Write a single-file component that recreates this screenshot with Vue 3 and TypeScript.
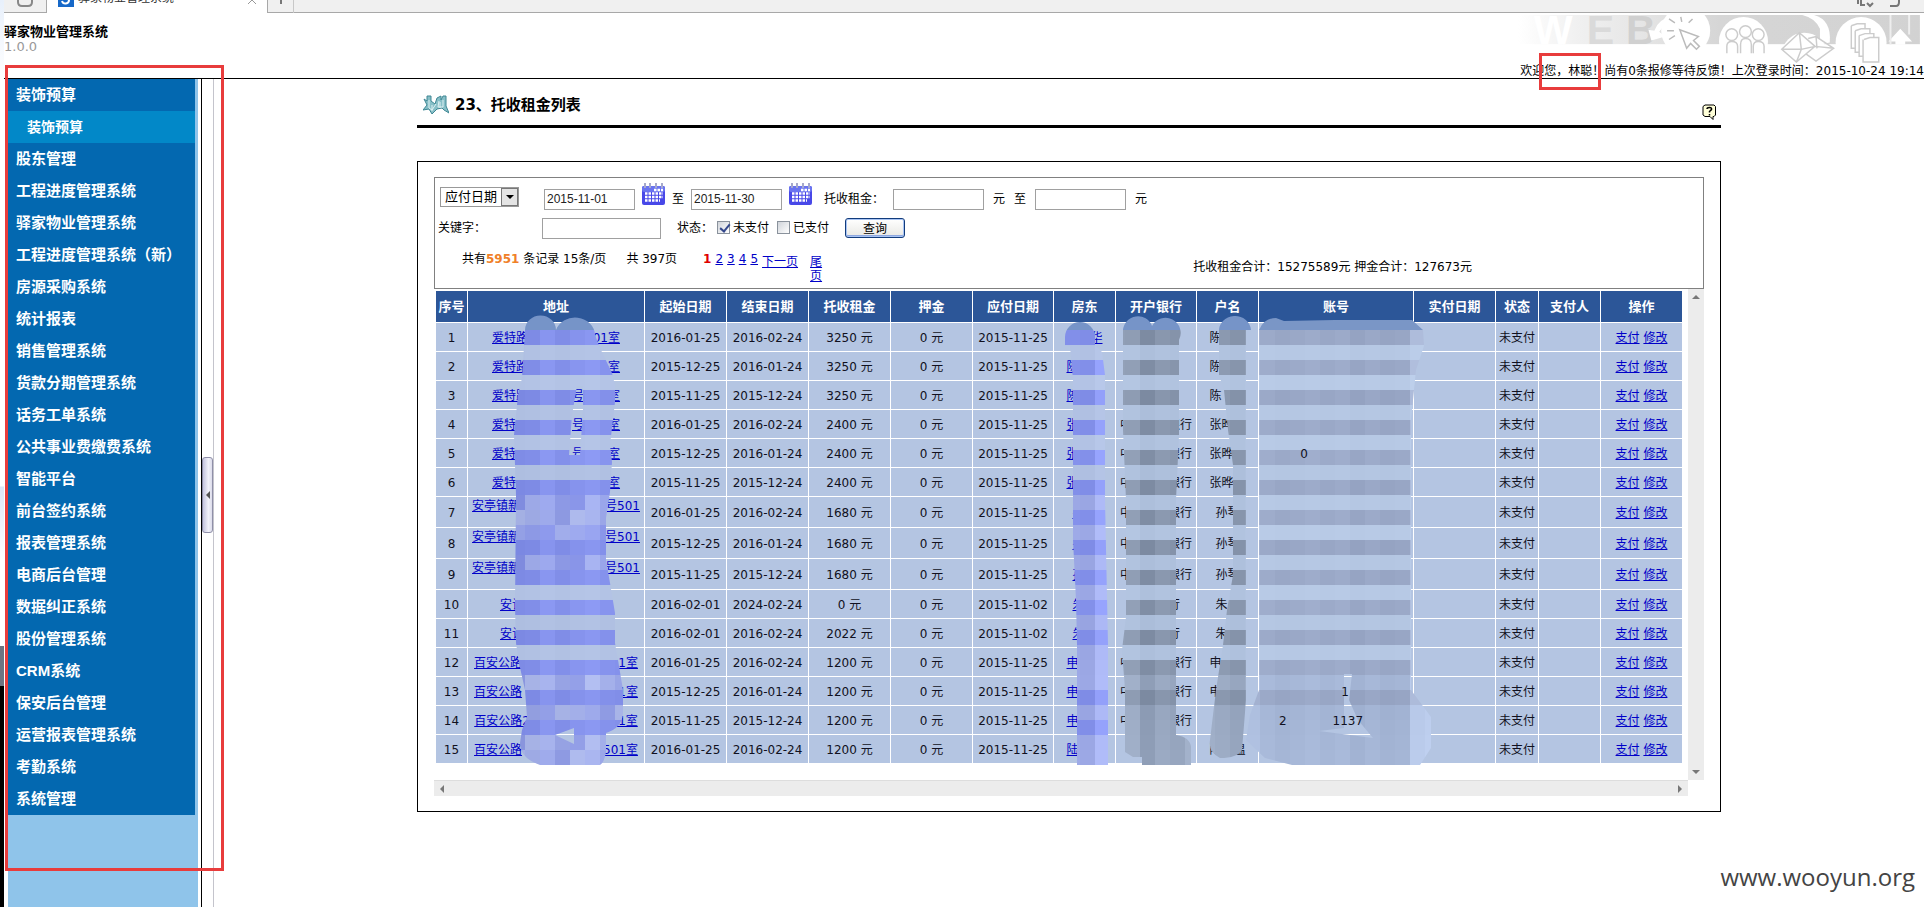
<script setup lang="ts">
import { ref } from 'vue'

type Part = string | number

interface Row {
  address: Part[]
  twoLines?: boolean
  start: string
  end: string
  rent: string
  due: string
  landlord: Part[]
  bank: Part[]
  holder: Part[]
  account: Part[]
}

interface Patch {
  id: string
  outline: string
  x: number
  count: number
  tones: string
  palette: Record<string, number[]>
  shade: number[]
}

const menu = [
  '股东管理', '工程进度管理系统', '驿家物业管理系统', '工程进度管理系统（新）', '房源采购系统',
  '统计报表', '销售管理系统', '货款分期管理系统', '话务工单系统', '公共事业费缴费系统', '智能平台',
  '前台签约系统', '报表管理系统', '电商后台管理', '数据纠正系统', '股份管理系统', 'CRM系统',
  '保安后台管理', '运营报表管理系统', '考勤系统', '系统管理',
]

const columns = [
  { title: '序号', width: 32 },
  { title: '地址', width: 177 },
  { title: '起始日期', width: 82 },
  { title: '结束日期', width: 82 },
  { title: '托收租金', width: 82 },
  { title: '押金', width: 82 },
  { title: '应付日期', width: 81 },
  { title: '房东', width: 62 },
  { title: '开户银行', width: 81 },
  { title: '户名', width: 62 },
  { title: '账号', width: 155 },
  { title: '实付日期', width: 82 },
  { title: '状态', width: 43 },
  { title: '支付人', width: 62 },
  { title: '操作', width: 82 },
]

const bankFull: Part[] = ['中', 36, '银行']
const shortAddress: Part[] = ['爱特路', 44, '号', 24, '室']
const longAddress: Part[] = ['安亭镇新', 85, '号501']

const rows: Row[] = [
  { address: ['爱特路', 27, '号', 18, '501室'], start: '2016-01-25', end: '2016-02-24', rent: '3250', due: '2015-11-25', landlord: [24, '华'], bank: [48], holder: ['陈', 24], account: [100] },
  { address: ['爱特路', 80, '室'], start: '2015-12-25', end: '2016-01-24', rent: '3250', due: '2015-11-25', landlord: ['陈', 24], bank: [48], holder: ['陈', 24], account: [100] },
  { address: shortAddress, start: '2015-11-25', end: '2015-12-24', rent: '3250', due: '2015-11-25', landlord: ['陈', 24], bank: [48], holder: ['陈', 24], account: [100] },
  { address: shortAddress, start: '2016-01-25', end: '2016-02-24', rent: '2400', due: '2015-11-25', landlord: ['张', 24], bank: bankFull, holder: ['张晔', 12], account: [100] },
  { address: shortAddress, start: '2015-12-25', end: '2016-01-24', rent: '2400', due: '2015-11-25', landlord: ['张', 24], bank: bankFull, holder: ['张晔', 12], account: ['0', 64] },
  { address: ['爱特路', 80, '室'], start: '2015-11-25', end: '2015-12-24', rent: '2400', due: '2015-11-25', landlord: ['张', 24], bank: bankFull, holder: ['张晔', 12], account: [100] },
  { address: longAddress, twoLines: true, start: '2016-01-25', end: '2016-02-24', rent: '1680', due: '2015-11-25', landlord: ['孙', 12], bank: bankFull, holder: ['孙琴'], account: [100] },
  { address: longAddress, twoLines: true, start: '2015-12-25', end: '2016-01-24', rent: '1680', due: '2015-11-25', landlord: ['孙', 12], bank: bankFull, holder: ['孙琴'], account: [100] },
  { address: longAddress, twoLines: true, start: '2015-11-25', end: '2015-12-24', rent: '1680', due: '2015-11-25', landlord: ['孙', 12], bank: bankFull, holder: ['孙琴'], account: [100] },
  { address: ['安计', 88], start: '2016-02-01', end: '2024-02-24', rent: '0', due: '2015-11-02', landlord: ['朱', 12], bank: [36, '行'], holder: ['朱', 12], account: [100] },
  { address: ['安计', 88], start: '2016-02-01', end: '2016-02-24', rent: '2022', due: '2015-11-02', landlord: ['朱', 12], bank: [36, '行'], holder: ['朱', 12], account: [100] },
  { address: ['百安公路', 81, '501室'], start: '2016-01-25', end: '2016-02-24', rent: '1200', due: '2015-11-25', landlord: ['申', 24], bank: bankFull, holder: ['申', 24], account: [100] },
  { address: ['百安公路', 81, '501室'], start: '2015-12-25', end: '2016-01-24', rent: '1200', due: '2015-11-25', landlord: ['申', 24], bank: bankFull, holder: ['申', 24], account: [18, '1'] },
  { address: ['百安公路2', 73, '501室'], start: '2015-11-25', end: '2015-12-24', rent: '1200', due: '2015-11-25', landlord: ['申', 24], bank: bankFull, holder: [36], account: ['2', 46, '1137', 30] },
  { address: ['百安公路', 81, '501室'], start: '2016-01-25', end: '2016-02-24', rent: '1200', due: '2015-11-25', landlord: ['陆', 24], bank: [72], holder: ['陆', 12, '温'], account: [100] },
]

const CELL = 15
const TOP = 315

// One tone letter per 15px band, top to bottom.
const banded = 'HDLDLDLDLDLDLDLDLDLDLDLDMDMMMM'
const bluePalette = { H: [118, 148, 200], D: [133, 146, 236], M: [158, 170, 231], L: [178, 194, 228], X: [150, 162, 234] }
const greyPalette = { H: [118, 148, 200], D: [138, 152, 175], M: [153, 168, 193], L: [176, 194, 222], X: [160, 175, 200] }

const patches: Patch[] = [
  {
    id: 'address',
    outline: 'M525 330 A15 14 0 0 1 556 330 A20 18 0 0 1 595 335 L600 348 L612 373 L615 385 V402 L610 445 L612 462 L610 492 L606 518 V560 L610 583 L615 613 V643 L618 660 L623 690 V713 Q622 728 606 733 V752 Q604 763 600 765 H540 Q520 758 520 743 L522 730 L527 717 L525 690 L519 663 L516 643 L515 607 L516 495 L514 435 L518 395 L522 378 Z M577 386 H583 V409 L580 455 H569 L572 415 Z M555 735 L574 728 V744 Z',
    x: 510, count: 8, tones: 'HDLDLDLDLDLDXMXDXDLDLDLDMDMDMM', palette: bluePalette, shade: [-8, -6, 4, -4, 2, 6, 0, -2],
  },
  {
    id: 'landlord',
    outline: 'M1065 337 A15 15 0 0 1 1095 337 V345 L1102 352 L1105 375 V500 L1108 645 V765 H1077 V645 L1076 600 L1073 540 V380 L1070 346 H1065 Z',
    x: 1065, count: 3, tones: 'HDLDLDLDLDLDMDMDMDMDMDMMMDMDMM', palette: bluePalette, shade: [-2, -4, 16],
  },
  {
    id: 'bank',
    outline: 'M1123 330 A15 15 0 0 1 1152 326 A14 14 0 0 1 1179 340 V435 L1176 500 V735 Q1190 737 1191 747 V765 H1142 V757 H1133 L1125 752 V690 L1122 650 L1126 617 V500 L1123 430 Z',
    x: 1110, count: 6, tones: banded, palette: greyPalette, shade: [8, 6, -12, 0, -4, 8],
  },
  {
    id: 'holder',
    outline: 'M1219 332 A16 15 0 0 1 1251 330 H1246 V700 L1242 750 Q1237 758 1220 758 Q1208 752 1210 740 L1216 690 L1223 645 L1227 610 L1233 575 V465 L1228 430 L1224 390 L1219 375 Z',
    x: 1200, count: 4, tones: banded, palette: greyPalette, shade: [6, 2, -4, 4],
  },
  {
    id: 'account',
    outline: 'M1259 330 Q1264 318 1276 318 L1284 321 L1335 320 H1412 L1423 330 L1424 346 L1416 370 L1411 420 V690 L1431 717 V748 L1420 765 H1292 L1265 758 L1246 740 L1250 715 L1259 690 Z M1344 674 H1352 L1349 700 L1358 720 L1373 738 L1319 731 L1344 728 Z',
    x: 1245, count: 13, tones: banded,
    palette: { H: [122, 150, 198], D: [155, 169, 200], M: [165, 182, 214], L: [182, 200, 228], X: [170, 185, 215] },
    shade: [10, 2, -2, 0, 3, -1, 2, -5, 0, -4, -2, 20, 24],
  },
]

function tiles(p: Patch) {
  const out: { x: number; y: number; fill: string }[] = []
  p.tones.split('').forEach((tone, r) => {
    for (let c = 0; c < p.count; c++) {
      const checker = tone === 'X' || (tone === 'M' && p.id === 'address') ? ((c * 7 + r * 3) % 4) * 9 - 14 : 0
      const spread = tone === 'H' ? 0 : tone === 'L' ? p.shade[c] / 4 : p.shade[c]
      const wobble = tone === 'H' ? 0 : ((c * 5 + r * 11) % 5) - 2
      const [red, green, blue] = p.palette[tone].map((v, i) => Math.round(v + spread + wobble + (i < 2 ? checker : checker / 4)))
      out.push({ x: p.x + c * CELL, y: TOP + r * CELL, fill: `rgb(${red},${green},${blue})` })
    }
  })
  return out
}

const dateType = ref('应付日期')
const from = ref('2015-11-01')
const to = ref('2015-11-30')
const min = ref('')
const max = ref('')
const keyword = ref('')
const unpaid = ref(true)
const paid = ref(false)
</script>

<template>
  <div class="screen">
    <div class="desktop"><i></i><b></b></div>
    <div class="page">
      <div class="chrome">
        <div class="chrome-home"><svg width="16" height="12"><path d="M1 0V2Q1 6 5 6H11Q15 6 15 2V0" fill="none" stroke="#888" stroke-width="2" /></svg></div>
        <div class="tab">
          <svg width="16" height="7"><rect width="16" height="7" fill="#1668c8" /><path d="M4 1Q5 4 8 3.500Q11 3 11 0" stroke="#fff" stroke-width="2" fill="none" /></svg>
          <span class="tab-title">驿家物业管理系统</span>
          <svg class="tab-close" width="8" height="6"><path d="M0 4 4 0 8 4" fill="none" stroke="#999" /></svg>
        </div>
        <div class="tab-new"><svg width="6" height="5"><path d="M3 0V4" stroke="#777" stroke-width="2" /></svg></div>
        <svg class="chrome-tools" width="68" height="8"><path d="M2 0V4M5 0V5H9M11 3 14 6 17 3M34 6H40Q43 6 43 2V0" fill="none" stroke="#777" stroke-width="2" /></svg>
      </div>

      <header class="header">
        <div>
          <div class="brand">驿家物业管理系统</div>
          <div class="version">1.0.0</div>
        </div>
        <div class="header-right">
          <svg class="banner" width="410" height="50" viewBox="4 0 410 50">
            <defs>
              <linearGradient id="fade"><stop offset="0" stop-color="#fff" /><stop offset=".14" stop-color="#f1f1f1" /><stop offset=".3" stop-color="#e6e6e6" /><stop offset=".5" stop-color="#d6d6d6" /><stop offset="1" stop-color="#d2d2d2" /></linearGradient>
            </defs>
            <rect x="4" width="410" height="30" fill="url(#fade)" />
            <g font-family="Liberation Sans, sans-serif" font-weight="700" font-size="42">
              <text x="20" y="30" fill="#fff">W</text>
              <text x="74" y="30" fill="#dadada">E</text><text x="114" y="30" fill="#d0d0d0">B</text>
            </g>
            <g fill="#fff">
              <circle cx="175" cy="16" r="25" /><circle cx="234" cy="27" r="25" /><circle cx="296" cy="41" r="23" /><circle cx="354" cy="28" r="26" />
              <path d="M137 15 140 26 154 22 148 17Q152 10 164 7L160 2Q147 4 143 16Z" />
              <path d="M294 0Q307 3 312 14V30L322 28Q324 5 306 0Z" />
              <path d="M382 27 394 14 406 27H399V30H389V27Z" />
            </g>
            <rect x="4" y="30" width="410" height="20" fill="#fff" />
            <path d="M384 0V30M403 0V20" stroke="#eee" stroke-width="2" />
            <g fill="none" stroke="#bbb" stroke-width="1.500">
              <path d="M169 15 176 34 180 29 186 35 189 32 183 26 188 22ZM158 4 164 8M170 2 171 7M182 4 178 8M156 16H163M158 25 164 21" />
              <g stroke="#ccc">
                <circle cx="222" cy="20" r="6" /><circle cx="236" cy="17" r="6" /><circle cx="249" cy="20" r="6" />
                <path d="M217 39V32Q217 27 222 27Q228 27 228 32V39M231 39V30Q231 24 236 24Q242 24 242 30V39M244 39V32Q244 27 249 27Q255 27 255 32V39" />
                <path d="M273 35 291 18 307 32 288 48ZM273 35 293 35 291 18M288 48 293 35 307 32M300 24 308 22 326 34 308 47 298 40M307 32 326 34M308 22 309 34" />
                <path d="M357 25 363 23H372V48H356V25M352 21 358 19H367V23M356 42H352V21M348 16 354 14H363V19M352 38H348V16M344 11 350 9H358V14M348 34H344V11" />
              </g>
            </g>
          </svg>
          <div class="welcome">欢迎您，林聪！尚有0条报修等待反馈！上次登录时间：2015-10-24 19:14</div>
        </div>
      </header>

      <div class="body">
        <nav class="sidebar">
          <ul>
            <li><a href="#">装饰预算</a></li>
            <li class="sub"><a href="#">装饰预算</a></li>
            <li v-for="m in menu" :key="m"><a href="#">{{ m }}</a></li>
          </ul>
        </nav>
        <div class="splitter"><button type="button" aria-label="收起菜单"><i></i></button></div>

        <main class="content">
          <div class="title-bar">
            <svg width="26" height="20" viewBox="0 0 26 20">
              <path d="M1 4 4 6 4 1 8 1 8 6 12 9 14 3 18 1 18 5 20 1 23 1 23 11 26 18 21 15 19 13 14 14 9 19 6 14 0 15 4 10Z" fill="#87bfc7" stroke="#3f8794" />
              <path d="M6 5V13L9 15 13 9M16 6 15 12 20 12 20 5M9 10 9 16M17 7V13" fill="none" stroke="#dff1f3" />
            </svg>
            <h1>23、托收租金列表</h1>
            <a class="help" href="#" aria-label="帮助">
              <svg width="15" height="16" viewBox="0 0 15 16"><path d="M3 1H12L13.500 2.500V11L12 12.500H11V15.500L8 12.500H3L1 11V2.500Z" fill="#ffffd8" stroke="#000" /><path d="M5 5Q5 3.500 7.500 3.500Q10 3.500 9.500 5.500L7.500 7.500V8.500M7.500 10V11.500" fill="none" stroke="#000" stroke-width="1.500" /></svg>
            </a>
          </div>

          <section class="panel">
            <form class="filter" @submit.prevent>
              <div class="line first">
                <span class="select">
                  <select v-model="dateType" aria-label="日期类型"><option>应付日期</option></select>
                  <i></i>
                </span>
                <div class="dates">
                  <input v-model="from" class="field" aria-label="开始日期" />
                  <svg class="cal" width="23" height="22" viewBox="0 0 23 22"><use href="#calendar" /></svg>
                  <label for="to">至</label>
                  <input id="to" v-model="to" class="field" />
                  <svg class="cal" width="23" height="22" viewBox="0 0 23 22">
                    <g id="calendar">
                      <rect y="3" width="23" height="19" rx="2" fill="#4848e8" />
                      <rect y="3" width="23" height="6" rx="2" fill="#6a74f0" />
                      <path d="M3 0V5M8 0V5M14 0V5M20 0V5" stroke="#a6a9cc" stroke-width="2" />
                      <path d="M12 7H21M3 10.500H21M3 14H21M3 17.500H18" stroke="#fff" stroke-width="2.500" stroke-dasharray="2.500 1" />
                    </g>
                  </svg>
                </div>
                <div class="amounts">
                  <label for="min">托收租金：</label>
                  <input id="min" v-model="min" class="field" />
                  <span>元</span>
                  <label for="max">至</label>
                  <input id="max" v-model="max" class="field" />
                  <span>元</span>
                </div>
              </div>
              <div class="line second">
                <label class="key-label" for="key">关键字：</label>
                <input id="key" v-model="keyword" class="field wide" />
                <span class="state">状态：</span>
                <label class="check"><input v-model="unpaid" type="checkbox" />未支付</label>
                <label class="check"><input v-model="paid" type="checkbox" />已支付</label>
                <button class="query" type="submit">查询</button>
              </div>
              <div class="line third">
                <span>共有<b class="count">5951</b> 条记录 15条/页</span>
                <span class="pages">共 397页</span>
                <span class="pager"><b>1</b><a href="#">2</a><a href="#">3</a><a href="#">4</a><a href="#">5</a></span>
                <a class="next" href="#">下一页</a>
                <a class="last" href="#">尾页</a>
                <span class="totals">托收租金合计：15275589元 押金合计：127673元</span>
              </div>
            </form>

            <div class="grid-area">
              <div class="table-wrap">
                <table>
                  <colgroup><col v-for="c in columns" :key="c.title" :style="{ width: c.width + 'px' }" /></colgroup>
                  <thead><tr><th v-for="c in columns" :key="c.title">{{ c.title }}</th></tr></thead>
                  <tbody>
                    <tr v-for="(r, i) in rows" :key="i" :class="{ tall: r.twoLines }">
                      <td>{{ i + 1 }}</td>
                      <td><a href="#"><template v-for="(p, k) in r.address" :key="k"><span v-if="typeof p === 'number'" class="gap" :style="{ width: p + 'px' }"></span><template v-else>{{ p }}</template></template></a><template v-if="r.twoLines"><br />&nbsp;</template></td>
                      <td>{{ r.start }}</td>
                      <td>{{ r.end }}</td>
                      <td>{{ r.rent }} 元</td>
                      <td>0 元</td>
                      <td>{{ r.due }}</td>
                      <td><a href="#"><template v-for="(p, k) in r.landlord" :key="k"><span v-if="typeof p === 'number'" class="gap" :style="{ width: p + 'px' }"></span><template v-else>{{ p }}</template></template></a></td>
                      <td><template v-for="(p, k) in r.bank" :key="k"><span v-if="typeof p === 'number'" class="gap" :style="{ width: p + 'px' }"></span><template v-else>{{ p }}</template></template></td>
                      <td><template v-for="(p, k) in r.holder" :key="k"><span v-if="typeof p === 'number'" class="gap" :style="{ width: p + 'px' }"></span><template v-else>{{ p }}</template></template></td>
                      <td><span class="above"><template v-for="(p, k) in r.account" :key="k"><span v-if="typeof p === 'number'" class="gap" :style="{ width: p + 'px' }"></span><template v-else>{{ p }}</template></template></span></td>
                      <td></td>
                      <td>未支付</td>
                      <td></td>
                      <td><a href="#">支付</a> <a href="#">修改</a></td>
                    </tr>
                  </tbody>
                </table>
                <svg class="mosaic" width="1254" height="490" viewBox="434 289 1254 490" shape-rendering="crispEdges">
                  <template v-for="p in patches" :key="p.id">
                    <clipPath :id="p.id"><path :d="p.outline" clip-rule="evenodd" /></clipPath>
                    <g :clip-path="`url(#${p.id})`">
                      <rect v-for="(t, k) in tiles(p)" :key="k" :x="t.x" :y="t.y" width="15" height="15" :fill="t.fill" />
                    </g>
                  </template>
                </svg>
              </div>
              <div class="vbar"><i class="up"></i><i class="down"></i></div>
              <div class="hbar"><i class="left"></i><i class="right"></i></div>
            </div>
          </section>
        </main>
      </div>
    </div>
    <div class="mark mark-menu"></div>
    <div class="mark mark-user"></div>
    <div class="watermark">www.wooyun.org</div>
  </div>
</template>

<style>
body { margin: 0; background: #fff; }
</style>

<style scoped>
.screen {
  position: relative;
  display: flex;
  height: 100vh;
  overflow: hidden;
  font-family: "DejaVu Sans", "Noto Sans CJK SC", sans-serif;
  font-size: 12px;
  line-height: 14px;
  color: #000;
}
.screen *, .screen { box-sizing: border-box; }
a { color: #0000c8; }
i { display: block; }

.desktop { flex: none; width: 4px; display: flex; flex-direction: column; background: linear-gradient(#e8f0fb 0, #fff 80px, #fff 486px, #dbe6f8 487px, #fff 560px); }
.desktop i { margin-top: auto; height: 40px; background: #6d7482; }
.desktop b { height: 221px; background: #000; }

.page { flex: 1; min-width: 0; display: flex; flex-direction: column; }

.chrome { flex: none; display: flex; height: 13px; overflow: hidden; background: #f0f0f0; box-shadow: inset 0 -1px #a8a8a8; }
.chrome-home { width: 43px; padding-left: 13px; border-right: 1px solid #a8a8a8; }
.tab { display: flex; align-items: flex-start; width: 221px; padding-left: 11px; background: #fff; border-right: 1px solid #a8a8a8; }
.tab-title { margin: -10px 0 0 4px; font-size: 12px; line-height: 16px; color: #333; }
.tab-close { margin-left: auto; margin-right: 11px; }
.tab-new { width: 26px; padding-left: 10px; border-right: 1px solid #c8c8c8; }
.chrome svg { display: block; }
.chrome-tools { margin-left: auto; }

.header { flex: none; display: flex; justify-content: space-between; height: 66px; border-bottom: 1px solid #000; }
.brand { margin-top: 11px; font-size: 13px; line-height: 16px; font-weight: 700; }
.version { font-size: 13px; line-height: 14px; color: #999; }
.header-right { display: flex; flex-direction: column; align-items: flex-end; padding-top: 2px; }
.banner { display: block; }
.welcome { line-height: 14px; white-space: nowrap; }

.body { flex: 1; min-height: 0; display: flex; }
.sidebar { flex: none; width: 190px; margin-left: 4px; padding-right: 3px; background: #8fc4ea; }
.sidebar ul { margin: 0; padding: 0; list-style: none; }
.sidebar li { height: 32px; background: #0368b0; }
.sidebar a { display: block; padding-left: 8px; font-family: "Liberation Sans", "Noto Sans CJK SC", sans-serif; font-size: 15px; line-height: 32px; font-weight: 700; color: #fff; text-decoration: none; }
.sidebar .sub { background: #0288c8; }
.sidebar .sub a { padding-left: 19px; font-size: 14px; }
.splitter { flex: none; display: flex; align-items: center; width: 13px; margin-left: 3px; padding-top: 4px; border-left: 1px solid #000; border-right: 1px solid #c4c4cc; }
.splitter button { display: flex; align-items: center; justify-content: center; width: 11px; height: 76px; padding: 0; border: 1px solid #8f8fa8; border-radius: 3px; background: linear-gradient(90deg, #c3c3de, #f2f2fa 60%, #dcdcea); }
.splitter i { border: 4px solid transparent; border-left: 0; border-right-color: #555; }

.content { flex: 1; min-width: 0; padding: 0 203px; }
.title-bar { display: flex; align-items: center; height: 49px; padding: 6px 4px 0 6px; border-bottom: 3px solid #000; }
h1 { margin: 0 0 0 6px; font-size: 15px; line-height: 20px; font-weight: 700; }
.help { margin: 14px 0 0 auto; }
.help svg { display: block; }

.panel { margin-top: 33px; padding: 15px 16px 15px; border: 1px solid #000; }
.filter { height: 112px; border: 1px solid #808080; }
.line { display: flex; align-items: center; white-space: nowrap; }
.first { height: 36px; padding: 6px 0 0 5px; }
.second { height: 28px; padding-left: 3px; }
.third { align-items: flex-start; height: 46px; padding: 10px 0 0 27px; }
.select { display: grid; width: 79px; height: 20px; margin-right: 25px; margin-bottom: 4px; border: 1px solid #999; }
.select select { grid-area: 1 / 1; appearance: none; border: 0; padding: 0 0 0 4px; background: #fff; font: 13px/18px "Liberation Sans", "Noto Sans CJK SC", sans-serif; color: #000; }
.select i { grid-area: 1 / 1; justify-self: end; width: 17px; height: 18px; border: 1px solid #777; background: #e4e4e4; pointer-events: none; display: flex; align-items: center; justify-content: center; }
.select i::after { content: ""; border: 4px solid transparent; border-bottom: 0; border-top-color: #000; }
.dates { display: flex; align-items: center; gap: 7px; }
.cal { margin-bottom: 10px; }
.amounts { display: flex; align-items: center; gap: 9px; margin-left: 12px; }
.field { width: 91px; height: 21px; padding: 0 2px; border: 1px solid #a0a0a0; background: #fff; font: 12px/19px "Liberation Sans", sans-serif; color: #222; outline: 0; }
.wide { width: 119px; }
.key-label { width: 104px; }
.state { margin-left: 16px; width: 40px; }
.check { display: flex; align-items: center; margin-right: 8px; }
.check input { appearance: none; width: 13px; height: 13px; margin: 0 3px 2px 0; border: 1px solid #8a929c; background: linear-gradient(135deg, #d0d4da, #fff); }
.check input:checked::after { content: ""; display: block; width: 4px; height: 8px; margin-left: 4px; border: solid #34488c; border-width: 0 2px 2px 0; transform: rotate(40deg); }
.query { width: 60px; height: 20px; margin-left: 8px; padding: 0; border: 1px solid #123c7c; border-radius: 3px; background: linear-gradient(#fff, #e8e8e4); box-shadow: inset 0 0 0 1px #a8c4f4, inset 0 -2px #8fa8e0; font: 12px/16px "Noto Sans CJK SC", sans-serif; color: #000; }
.count { color: #f08028; }
.pages { margin-left: 20px; }
.pager { display: flex; gap: 4px; margin-left: 26px; }
.pager b { color: #e00000; }
.next { margin: 3px 0 0 4px; }
.last { width: 12px; margin: 3px 0 0 12px; white-space: normal; }
.totals { margin: 8px 0 0 auto; padding-right: 231px; }

.grid-area { display: grid; grid-template-columns: minmax(0, 1fr) 16px; grid-template-rows: 491px 16px; }
.table-wrap { position: relative; padding: 2px 5px 0 2px; }
table { width: 100%; border-collapse: separate; border-spacing: 0; table-layout: fixed; }
th, td { padding: 0; border-right: 1px solid #fff; border-bottom: 1px solid #fff; text-align: center; white-space: nowrap; overflow: visible; }
th { height: 32px; background: #2c5698; color: #fff; font-size: 13px; line-height: 16px; }
td { height: 29px; padding-top: 2px; line-height: 14px; background: #b4c5e2; color: #101020; }
.tall td { height: 31px; }
.gap { display: inline-block; }
.above { position: relative; z-index: 2; }
.mosaic { position: absolute; left: 0; top: 0; pointer-events: none; }
.vbar, .hbar { display: flex; justify-content: space-between; align-items: center; background: #ececec; }
.vbar { flex-direction: column; padding: 6px 0; }
.hbar { padding: 0 6px; border-top: 1px solid #ddd; }
.up { border: 4px solid transparent; border-top: 0; border-bottom-color: #777; }
.down { border: 4px solid transparent; border-bottom: 0; border-top-color: #777; }
.left { border: 4px solid transparent; border-left: 0; border-right-color: #777; }
.right { border: 4px solid transparent; border-right: 0; border-left-color: #777; }

.mark { position: absolute; border: 3px solid #e83c3c; pointer-events: none; }
.mark-menu { left: 5px; top: 65px; width: 219px; height: 806px; }
.mark-user { right: 323px; top: 53px; width: 62px; height: 37px; }
.watermark { position: absolute; right: 9px; bottom: 14px; font: 24px/32px "Open Sans", sans-serif; color: #444; }
</style>
